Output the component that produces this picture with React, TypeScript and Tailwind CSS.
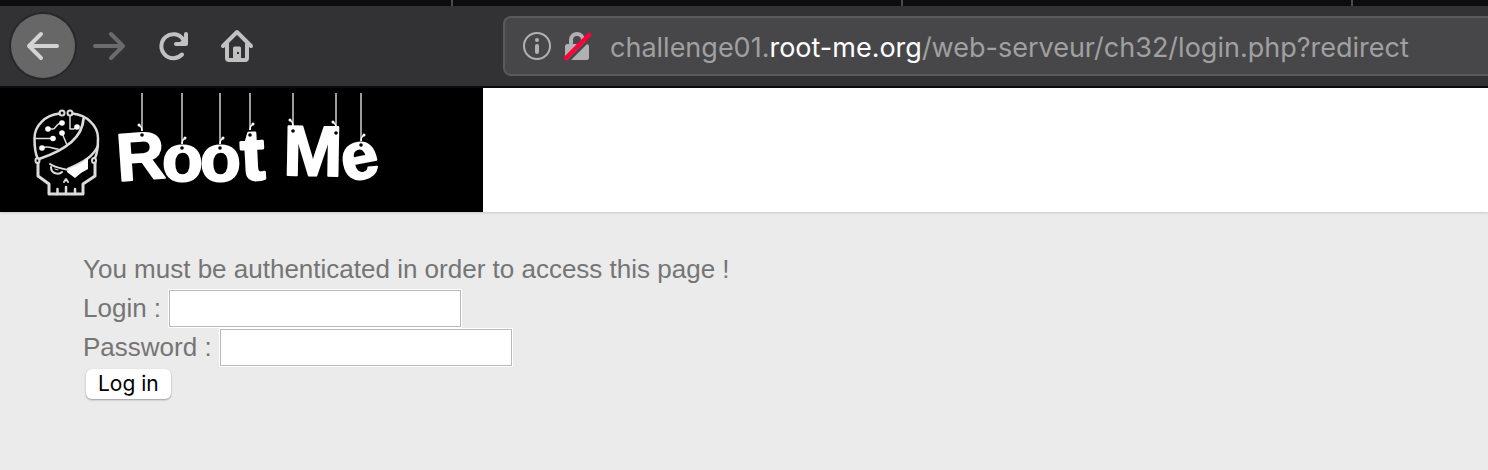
import type { ReactNode } from "react";

function ToolbarButton({ label, children }: { label: string; children: ReactNode }) {
  return (
    <button type="button" aria-label={label} className="flex h-16 w-16 shrink-0 items-center justify-center">
      {children}
    </button>
  );
}

function Toolbar() {
  return (
    <nav className="flex h-[82px] items-center border-b-2 border-[#0c0c0d] bg-[#323234]">
      <div className="flex w-[503px] shrink-0 items-center pl-[11px]">
        <button
          type="button"
          aria-label="Back"
          className="flex h-16 w-16 shrink-0 items-center justify-center rounded-full bg-[#676767] ring-2 ring-[#28282a]"
        >
          <svg width="34" height="30" viewBox="0 0 34 30" fill="none" stroke="#d3d3d3" strokeWidth="4" strokeLinecap="round" strokeLinejoin="round">
            <path d="M31 15H3M15 3L3 15l12 12" />
          </svg>
        </button>
        <ToolbarButton label="Forward">
          <svg width="34" height="30" viewBox="0 0 34 30" fill="none" stroke="#6b6b6c" strokeWidth="4" strokeLinecap="round" strokeLinejoin="round" className="ml-1">
            <path d="M3 15h28M19 3l12 12-12 12" />
          </svg>
        </ToolbarButton>
        <ToolbarButton label="Reload">
          <svg width="32" height="30" viewBox="0 0 32 30" fill="none" stroke="#c1c1c2" strokeWidth="4" strokeLinecap="round" strokeLinejoin="round" className="ml-1">
            <path d="M25 23.500A12 12 0 1 1 26 8" />
            <path d="M29 3v10H19" />
            <path d="M29 5v9h-9z" fill="#c1c1c2" stroke="none" />
          </svg>
        </ToolbarButton>
        <ToolbarButton label="Home">
          <svg width="34" height="34" viewBox="0 0 34 34" fill="none" stroke="#c1c1c2" strokeWidth="4" strokeLinecap="round" strokeLinejoin="round" className="ml-1">
            <path d="M3 17L17 3l14 14" />
            <path d="M7 15v14a2 2 0 0 0 2 2h16a2 2 0 0 0 2-2V15" />
            <path d="M13 31V19a1.5 1.5 0 0 1 1.500-1.500h5A1.500 1.500 0 0 1 21 19v12z" fill="#c1c1c2" stroke="none" />
            <rect x="17" y="23" width="2" height="2" fill="#323234" stroke="none" />
          </svg>
        </ToolbarButton>
      </div>
      <div className="flex h-[60px] min-w-0 flex-1 items-center rounded-l-lg border-2 border-r-0 border-[#5a5a5c] bg-[#474749] pl-[18px]">
        <button type="button" aria-label="Site information" className="shrink-0">
          <svg width="28" height="28" viewBox="0 0 28 28" fill="none">
            <circle cx="14" cy="14" r="13" stroke="#b1b1b3" strokeWidth="2" />
            <circle cx="14" cy="8" r="2" fill="#b1b1b3" />
            <rect x="12" y="12" width="4" height="10" rx="2" fill="#b1b1b3" />
          </svg>
        </button>
        <button type="button" aria-label="Connection is not secure" className="ml-3 shrink-0">
          <svg width="29" height="30" viewBox="0 0 29 30" fill="none">
            <path d="M8 14V9a6 6 0 0 1 12 0v5" stroke="#b1b1b3" strokeWidth="4" />
            <rect x="2" y="13" width="24" height="16" rx="2.500" fill="#b1b1b3" />
            <path d="M4 31L28 7" stroke="#474749" strokeWidth="3" />
            <path d="M3 27L26 4" stroke="#ff0039" strokeWidth="4.500" strokeLinecap="round" />
          </svg>
        </button>
        <div
          role="textbox"
          aria-label="Address"
          contentEditable
          suppressContentEditableWarning
          className="ml-[18px] min-w-0 flex-1 overflow-hidden whitespace-nowrap pt-[3px] font-['Inter',sans-serif] text-[27px] leading-8 text-[#a0a0a1] outline-none"
        >
          challenge01.<span className="text-white">root-me.org</span>/web-serveur/ch32/login.php?redirect
        </div>
      </div>
    </nav>
  );
}

function Skull() {
  return (
    <g fill="none" stroke="#dcdcdc" strokeWidth="2.500" strokeLinejoin="round" strokeLinecap="round">
      <path d="M59.500 25.500C45 27 34.500 38 34.500 50c0 8 0 14 3 20M72.500 25.500C87 27 98 38 98 50c0 8 0 14-3 20" />
      <path d="M38 75v13l11 8v10h34V96l12-8V75" strokeWidth="3" />
      <circle cx="62" cy="25" r="2.500" strokeWidth="2" />
      <circle cx="70" cy="25" r="2.500" strokeWidth="2" />
      <path d="M39 71C57 65 82 54 83.500 31" strokeWidth="2.800" />
      <path d="M98 58C93 68 86 73 68 81" />
      <ellipse cx="37.500" cy="72.500" rx="2" ry="2.500" strokeWidth="2" />
      <ellipse cx="94" cy="72.500" rx="2" ry="2.500" strokeWidth="2" />
      <path d="M70 28v13h4l3-2M48 41h5c3 0 3-6 9-6M35 50.500h18M62 45l5 12M42 60c8-3 9 1 16 1" strokeWidth="1.500" />
      <g fill="#ffffff" stroke="none">
        <circle cx="48" cy="41" r="2.800" />
        <circle cx="62" cy="35" r="2.800" />
        <circle cx="77" cy="39" r="2.800" />
        <circle cx="53" cy="50.500" r="2.800" />
        <circle cx="62" cy="45" r="2.800" />
        <circle cx="42" cy="60" r="2.800" />
        <path d="M67 81c8-2 14-5 21-11v11l-7 4-6 5-8-6z" />
      </g>
      <path d="M50 76c6 4 11 4 18 6" strokeWidth="2" />
      <path d="M51 79c0 7 8 8 11 5" strokeWidth="2" />
      <path d="M55 81l3 1" strokeWidth="1" />
      <path d="M64 94l2-3 2 3" strokeWidth="2" />
      <path d="M57.500 101v5M66 99v7M75 101v5" />
    </g>
  );
}

const strings = [
  { x: 142, end: 43, hole: 47, side: -1 },
  { x: 182, end: 56, hole: 60, side: 1 },
  { x: 220, end: 56, hole: 60, side: 1 },
  { x: 250, end: 42, hole: 47, side: 1 },
  { x: 293, end: 38, hole: 43, side: -1 },
  { x: 336, end: 40, hole: 45, side: -1 },
  { x: 361, end: 53, hole: 57, side: 1 },
];

function Logo() {
  return (
    <svg width="483" height="124" viewBox="0 0 483 124" className="block bg-black" role="img" aria-label="Root Me">
      <Skull />
      <text
        x="118 162 200 242 266 283 345"
        y="93 93 93 92 92 87 94"
        rotate="-4 0 0 -3 0 1 -11"
        fill="#ffffff"
        stroke="#ffffff"
        strokeWidth="2"
        strokeLinejoin="round"
        className="font-['Liberation_Sans',sans-serif] text-[67px] font-bold"
      >
        Roo<tspan fontSize="71" strokeWidth="3">t</tspan> <tspan fontSize="71">M</tspan>e
      </text>
      {strings.map((s) => (
        <g key={s.x}>
          <path d={`M${s.x} 5V${s.end}`} stroke="#d0d0d0" strokeWidth="1.500" />
          <path
            d={`M${s.x} ${s.end}q0-4 ${s.side * 3}-6`}
            fill="none"
            stroke="#ffffff"
            strokeWidth="1.500"
          />
          <circle cx={s.x + s.side * 3} cy={s.end - 6} r="1.500" fill="#ffffff" />
          <circle cx={s.x} cy={s.hole} r="1.800" fill="#000000" />
        </g>
      ))}
    </svg>
  );
}

function Field({ id, label, type }: { id: string; label: string; type: string }) {
  return (
    <div className="flex h-[39px] items-center gap-2">
      <label htmlFor={id}>{label}</label>
      <input
        id={id}
        name={id}
        type={type}
        className="h-[37px] w-[292px] border border-[#b9b9b9] bg-white px-1 text-[22px] text-black outline outline-white"
      />
    </div>
  );
}

export default function App() {
  return (
    <div className="flex min-h-screen flex-col bg-[#ebebeb] font-['Liberation_Sans',sans-serif]">
      <div className="flex h-[6px] bg-[#0c0c0d]">
        <div className="w-[453px] border-r-2 border-[#4a4a4b]" />
        <div className="w-[450px] border-r-2 border-[#4a4a4b]" />
        <div className="w-[450px] border-r-2 border-[#4a4a4b]" />
      </div>
      <Toolbar />
      <header className="bg-white shadow-[0_1px_2px_rgba(0,0,0,0.15)]">
        <Logo />
      </header>
      <main className="px-[83px] pt-[38px] text-[26px] leading-[39px] text-[#757575]">
        <p>You must be authenticated in order to access this page !</p>
        <form onSubmit={(event) => event.preventDefault()}>
          <Field id="login" label="Login :" type="text" />
          <Field id="password" label="Password :" type="password" />
          <button
            type="submit"
            className="ml-[3px] mt-[2px] block h-[30px] rounded-md bg-white px-3 font-['Inter',sans-serif] text-[21px] leading-[30px] text-black shadow-[0_1px_2px_rgba(0,0,0,0.35)]"
          >
            Log in
          </button>
        </form>
      </main>
    </div>
  );
}
